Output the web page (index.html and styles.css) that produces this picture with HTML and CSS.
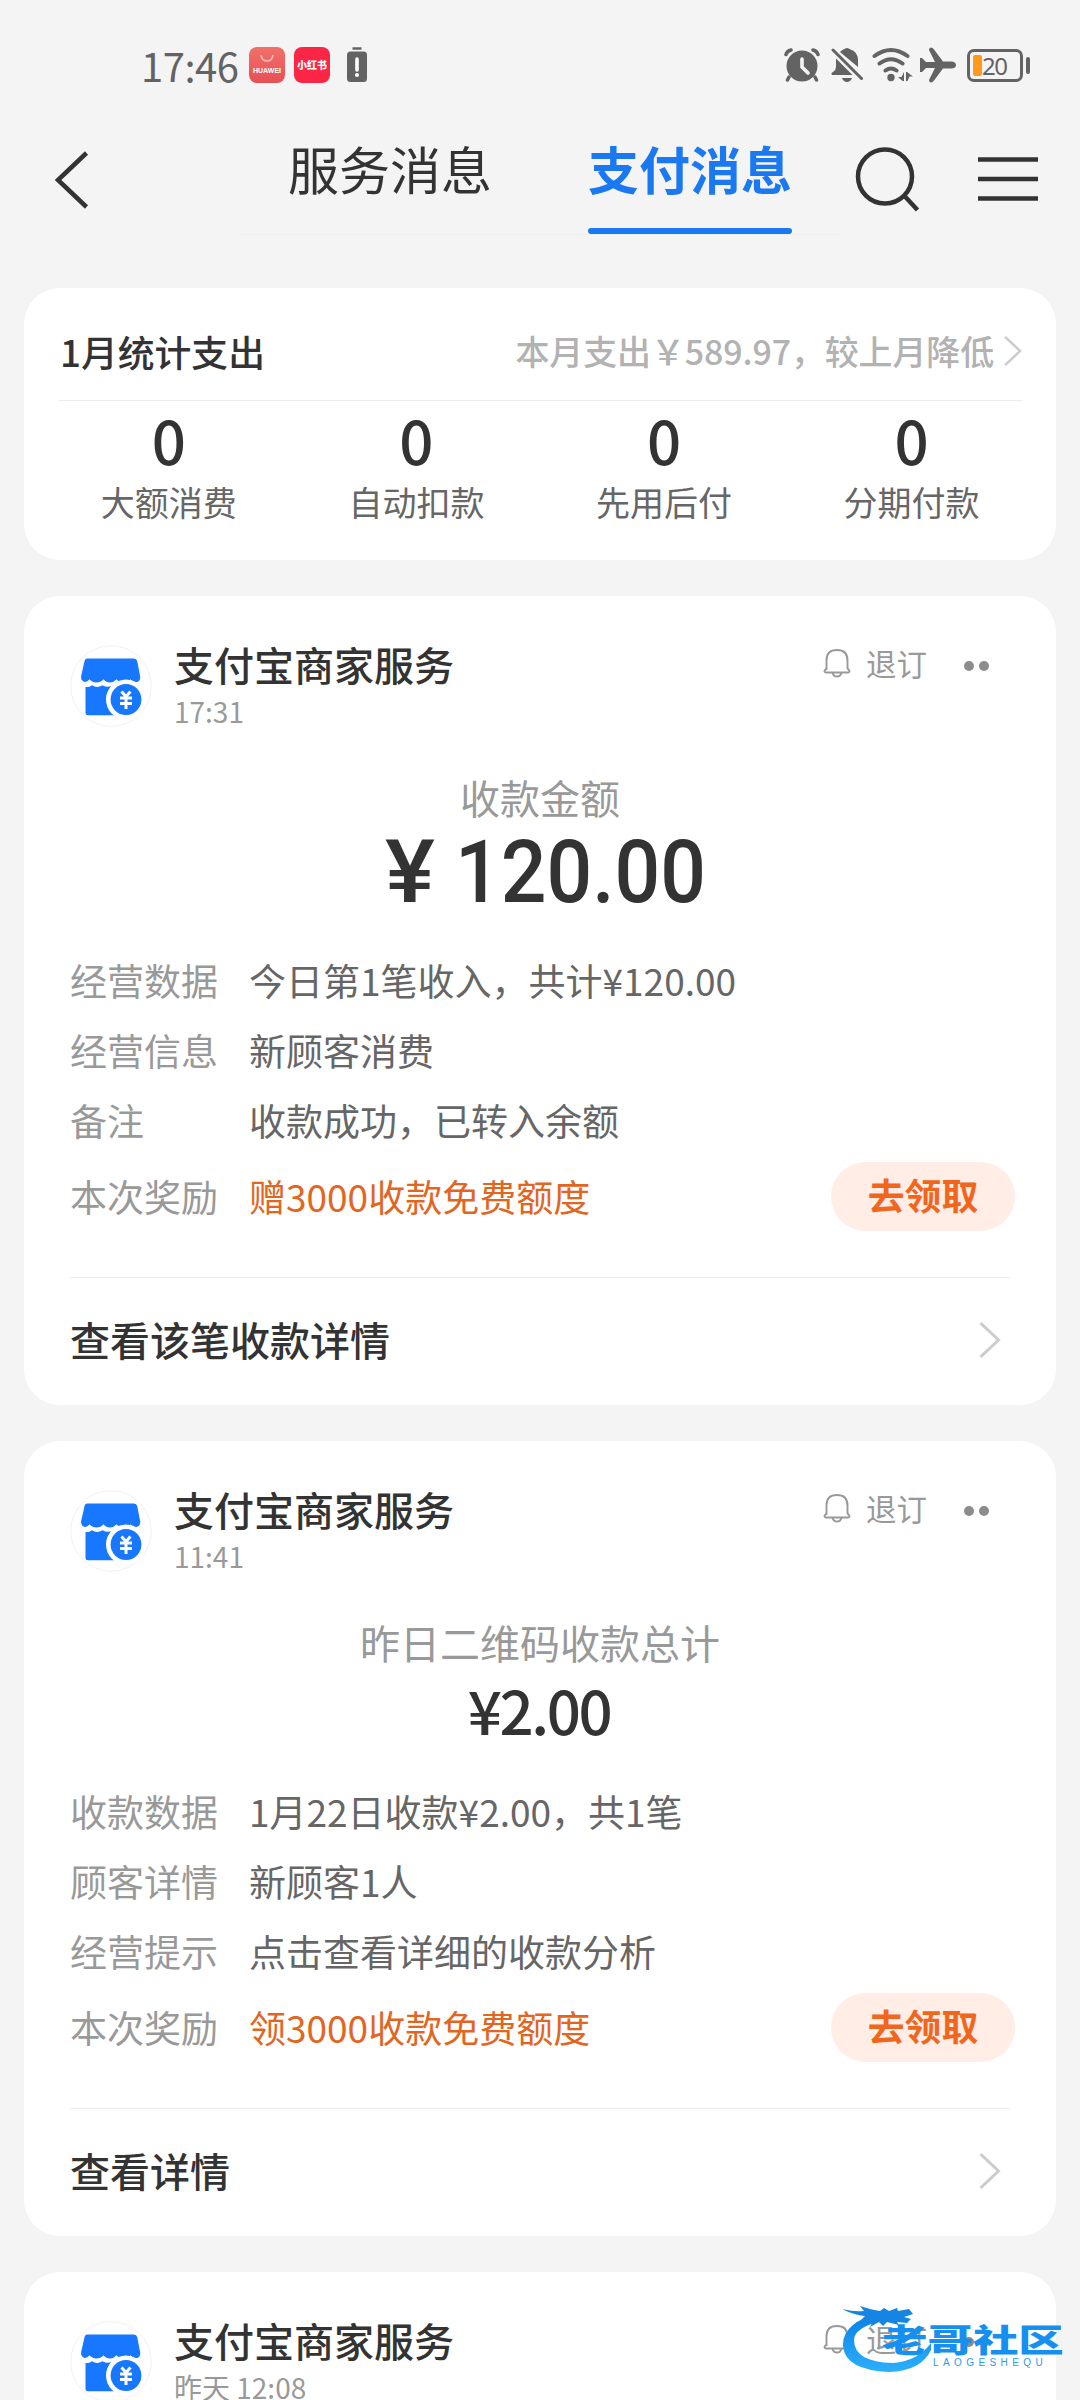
FILE: index.html
```html
<!DOCTYPE html>
<html lang="zh-CN">
<head>
<meta charset="utf-8">
<title>支付消息</title>
<link rel="stylesheet" href="styles.css">
</head>
<body>
<svg class="defs" aria-hidden="true">
  <symbol id="store" viewBox="0 0 82 82">
    <circle cx="41" cy="41" r="40.3" fill="#fff" stroke="#f1f1f1"/>
    <path d="M18 13.5h46q2.500 0 3.200 2.500l3 15.500q.4 5-4.200 5.800-3.200.4-5.500-3-2.800 3.300-7 3.300t-7-3.300q-2.800 3.300-6.500 3.300t-6.500-3.300q-3 3.300-7 3.300t-7-3.300q-2.500 3.300-5.500 2.500-3.600-1.600-2.800-6l3.400-15q.8-2.300 2.400-2.300z" fill="#1777ff"/>
    <path d="M15.500 42q3.500.5 6.500-1.800 5 3.500 10.500 0 5 3 9.500.5h8v29.500H18q-2.500 0-2.500-2.500z" fill="#1777ff"/>
    <circle cx="56" cy="54.500" r="20" fill="#fff"/>
    <circle cx="56" cy="54.500" r="15.400" fill="#1777ff"/>
    <path d="M51.500 46.500l4.500 5 4.500-5M50 53h12M50 58.500h12M56 51.500v12.500" fill="none" stroke="#fff" stroke-width="3"/>
  </symbol>
  <symbol id="bell" viewBox="0 0 30 30">
    <path d="M4.500 22v-9.500Q4.500 2 15 2t10.500 10.500V20q.3 1.200 1.600 2.200 1.200 2-.9 2.300H3.800q-2.100-.3-.9-2.300 1.300-1 1.600-2.200M10.500 25q1 3.500 4.500 3.500t4.500-3.500" fill="none" stroke="#999" stroke-width="1.900"/>
  </symbol>
  <symbol id="chev" viewBox="0 0 24 38">
    <path d="M2.500 2l18 17-18 17" fill="none" stroke="#ccc" stroke-width="3"/>
  </symbol>
</svg>
<div class="screen">
  <header class="status">
    <div class="status-left">
      <span class="clock">17:46</span>
      <span class="app app-hw"><svg width="16" height="8" viewBox="0 0 16 8"><path d="M2 0q1 6 6 6t6-6" fill="none" stroke="#fbb" stroke-width="1.600"/></svg><b>HUAWEI</b></span>
      <span class="app app-red">小红书</span>
      <svg class="warn" width="20" height="36" viewBox="0 0 20 36"><path d="M5.500 1.500h9" stroke="#636363" stroke-width="2.500"/><rect y="4.500" width="20" height="30.500" rx="3.500" fill="#636363"/><path d="M10 12v11" stroke="#fff" stroke-width="3.600" stroke-linecap="round"/><circle cx="10" cy="28" r="2" fill="#fff"/></svg>
    </div>
    <div class="status-right">
      <svg width="36" height="34" viewBox="0 0 36 34"><circle cx="18" cy="18" r="15.500" fill="#636363"/><path d="M2 6.500q1-3.500 5-4.500M34 6.500q-1-3.500-5-4.500M5 29l-1.500 3M31 29l1.500 3" stroke="#636363" stroke-width="3.500" fill="none" stroke-linecap="round"/><path d="M18 11v8l6 6" stroke="#f4f4f4" stroke-width="3.600" fill="none" stroke-linecap="round"/></svg>
      <svg width="32" height="36" viewBox="0 0 32 36"><path d="M9 5q1.500-2 3.500-2.500 3.500-3 7 0Q26 4.500 27 12v8zM5 11.500L21.500 28H1q-1.500-2 1-3 3-2 3-5zM11 31h10q-1.500 4-5 4t-5-4z" fill="#636363"/><path d="M2 3l28.500 28.500" stroke="#636363" stroke-width="3" stroke-linecap="round"/></svg>
      <svg width="42" height="36" viewBox="0 0 42 36"><g fill="none" stroke="#636363" stroke-width="4" stroke-linecap="round"><path d="M2.500 9q16.500-12 33 0M7.500 16.500q11.500-8.500 23 0M13.500 23.500q5.500-4 11 0"/></g><circle cx="19" cy="30.500" r="3.700" fill="#636363"/><path d="M32 25v9h-1.500L26 30h3.500zM35 25l6 4.500h-3.500l-2 4.500H34v-9z" fill="#636363"/></svg>
      <svg width="36" height="36" viewBox="0 0 36 36"><path d="M0 11h2l4 4h9L9 3q0-2.500 2-2.500 1.500 0 3 2L23 14.500h9q4 .5 4 3.500t-4 3.500h-9L14 33.500q-1.500 2-3 2-2 0-2-2.500l6-12H6l-4 4H0z" fill="#636363"/></svg>
      <span class="battery"><i></i>20</span><span class="tip"></span>
    </div>
  </header>

  <nav class="nav">
    <svg class="back" width="36" height="60" viewBox="0 0 36 60"><path d="M33.500 3L5 30l28.500 27" fill="none" stroke="#333" stroke-width="4.500"/></svg>
    <div class="tabs">
      <span class="tab">服务消息</span>
      <span class="tab active">支付消息</span>
    </div>
    <svg class="search" width="66" height="68" viewBox="0 0 66 68"><circle cx="30" cy="31.500" r="27" fill="none" stroke="#333" stroke-width="4.500"/><path d="M50 51.500L62.500 65" stroke="#333" stroke-width="4.500"/></svg>
    <svg class="menu" width="60" height="46" viewBox="0 0 60 46"><path d="M0 3.500h60M0 23h60M0 42.500h60" stroke="#333" stroke-width="4.700"/></svg>
  </nav>

  <main class="list">
    <section class="card summary">
      <div class="sum-head">
        <h2>1月统计支出</h2>
        <span class="sum-note">本月支出￥589.97，较上月降低</span>
        <svg class="sum-chev" viewBox="0 0 24 38"><use href="#chev"/></svg>
      </div>
      <div class="stats">
        <div class="stat"><b>0</b><span>大额消费</span></div>
        <div class="stat"><b>0</b><span>自动扣款</span></div>
        <div class="stat"><b>0</b><span>先用后付</span></div>
        <div class="stat"><b>0</b><span>分期付款</span></div>
      </div>
    </section>

    <section class="card msg">
      <div class="head">
        <svg class="avatar"><use href="#store"/></svg>
        <div class="who"><h3>支付宝商家服务</h3><time>17:31</time></div>
        <div class="unsub"><svg class="bell"><use href="#bell"/></svg><span>退订</span><i class="dot"></i><i class="dot"></i></div>
      </div>
      <p class="caption">收款金额</p>
      <p class="amount din"><span class="yen">¥</span><span class="num">120.00</span></p>
      <dl class="rows">
        <div><dt>经营数据</dt><dd>今日第1笔收入，共计¥120.00</dd></div>
        <div><dt>经营信息</dt><dd>新顾客消费</dd></div>
        <div><dt>备注</dt><dd>收款成功，已转入余额</dd></div>
        <div class="reward"><dt>本次奖励</dt><dd>赠3000收款免费额度</dd><button>去领取</button></div>
      </dl>
      <div class="foot"><span>查看该笔收款详情</span><svg class="chev"><use href="#chev"/></svg></div>
    </section>

    <section class="card msg">
      <div class="head">
        <svg class="avatar"><use href="#store"/></svg>
        <div class="who"><h3>支付宝商家服务</h3><time>11:41</time></div>
        <div class="unsub"><svg class="bell"><use href="#bell"/></svg><span>退订</span><i class="dot"></i><i class="dot"></i></div>
      </div>
      <p class="caption">昨日二维码收款总计</p>
      <p class="amount">¥2.00</p>
      <dl class="rows">
        <div><dt>收款数据</dt><dd>1月22日收款¥2.00，共1笔</dd></div>
        <div><dt>顾客详情</dt><dd>新顾客1人</dd></div>
        <div><dt>经营提示</dt><dd>点击查看详细的收款分析</dd></div>
        <div class="reward"><dt>本次奖励</dt><dd>领3000收款免费额度</dd><button>去领取</button></div>
      </dl>
      <div class="foot"><span>查看详情</span><svg class="chev"><use href="#chev"/></svg></div>
    </section>

    <section class="card msg">
      <div class="head">
        <svg class="avatar"><use href="#store"/></svg>
        <div class="who"><h3>支付宝商家服务</h3><time>昨天 12:08</time></div>
        <div class="unsub"><svg class="bell"><use href="#bell"/></svg><span>退订</span><i class="dot"></i><i class="dot"></i></div>
      </div>
    </section>
  </main>

  <div class="mark">
    <svg class="dragon" width="96" height="72" viewBox="0 0 96 72">
      <defs><linearGradient id="g" x1="0" y1="0" x2="0" y2="1"><stop offset="0" stop-color="#0a7fe6"/><stop offset="1" stop-color="#2bb0fb"/></linearGradient></defs>
      <path d="M36 9Q-1 19 0 42q2 24 46 26 32-1 42-22v-7q-13 18-38 20-39-1-39-23 0-12 27-19z" fill="url(#g)"/>
      <path d="M-1 5q12 3 22 2l-4-5q12 4 20 5l4-3 5 3 8-3 1 3 11-2 4 5-9 3 7 2-4 4-10-1 2 3-12-3-4 4-4-4-9 5 2-4-9 2 6-6-8 1 4-4Q10 11-1 5z" fill="#1585e4"/>
    </svg>
    <span class="mark-cn">老哥社区</span>
    <span class="mark-en">LAOGESHEQU</span>
  </div>
</div>
</body>
</html>
```
FILE: styles.css
```css
* { box-sizing: border-box; margin: 0; padding: 0; }
body {
  background: #f4f4f4;
  color: #333;
  font-family: "Noto Sans CJK SC", sans-serif;
}
.defs { position: absolute; width: 0; height: 0; }
.screen { position: relative; width: 1080px; height: 2400px; overflow: hidden; }
h2, h3 { font-weight: 500; }

/* status bar */
.status { display: flex; justify-content: space-between; height: 130px; padding: 0 50px 0 141px; color: #636363; }
.status-left, .status-right { display: flex; align-items: center; }
.clock { width: 108px; font-size: 40px; line-height: 50px; letter-spacing: -.5px; }
.app { display: flex; flex-direction: column; align-items: center; justify-content: center; width: 36px; height: 36px; border-radius: 8px; color: #fff; }
.app-hw { margin-right: 9px; background: linear-gradient(#f2706a, #e65055); }
.app-hw b { font: bold 7px/10px "Liberation Sans", sans-serif; margin-top: 3px; }
.app-red { margin-right: 17px; background: #fb2645; font-size: 10px; font-weight: 900; line-height: 14px; }
.status-right svg:nth-child(1) { margin-right: 11px; }
.status-right svg:nth-child(2) { margin-right: 9px; }
.status-right svg:nth-child(3) { margin-right: 6px; }
.status-right svg:nth-child(4) { margin-right: 11px; }
.battery { display: flex; align-items: center; width: 56px; height: 33px; padding-left: 3px; border: 3px solid #636363; border-radius: 7px; font: 24px/27px "Noto Sans", sans-serif; letter-spacing: -1.500px; }
.battery i { width: 9px; height: 21px; border-radius: 2px; background: #ff9a1f; }
.tip { width: 4px; height: 17px; margin-left: 3px; border-radius: 2px; background: #636363; }

/* navigation */
.nav { display: flex; height: 105px; padding-left: 53px; }
.back { margin-top: 20px; }
.tabs { display: flex; gap: 96px; width: 600px; margin-left: 151px; padding-left: 48px; border-bottom: 1px solid #efefef; }
.tab { width: 204px; height: 104px; padding-top: 3px; font-size: 51px; line-height: 70px; white-space: nowrap; }
.tab.active { color: #1a78f0; font-weight: 700; }
.tab.active::after { content: ""; display: block; height: 6px; margin-top: 25px; border-radius: 3px; background: #1a78f0; }
.search { margin: 15px 0 0 15px; }
.menu { margin: 26px 0 0 57px; }

/* cards */
.list { display: flex; flex-direction: column; gap: 36px; padding: 53px 24px 0; }
.card { border-radius: 36px; background: #fff; }
.summary { height: 272px; padding: 0 21px; }
.sum-head { display: flex; align-items: center; height: 113px; margin: 0 12px 0 14px; padding: 13px 0 0 1px; border-bottom: 1px solid #ececec; }
.sum-head h2 { font-size: 36.800px; line-height: 50px; }
.sum-note { margin-left: auto; color: #b2b2b2; font-size: 34px; font-weight: 500; line-height: 48px; letter-spacing: -.15px; }
.sum-chev { width: 20px; height: 32px; margin-left: 9px; }
.stats { display: grid; grid-template-columns: repeat(4, 247.600px); }
.stat { display: flex; flex-direction: column; align-items: center; }
.stat b { height: 78px; font-size: 60px; font-weight: 500; line-height: 76px; }
.stat span { color: #666; font-size: 34px; line-height: 46px; }

.head { display: flex; height: 168px; padding: 49px 62px 0 46px; }
.avatar { width: 82px; height: 82px; }
.who { display: flex; flex-direction: column; margin-left: 22px; }
.who h3 { height: 44px; font-size: 40px; line-height: 38px; white-space: nowrap; }
.who time { color: #999; font-size: 28px; line-height: 44px; }
.unsub { display: flex; align-items: center; height: 36px; margin-left: auto; color: #999; font-size: 30.500px; line-height: 36px; }
.bell { width: 30px; height: 30px; margin-right: 14px; }
.unsub span { margin-right: 37px; }
.dot { width: 10px; height: 10px; margin: 6px 5px 0 0; border-radius: 50%; background: #8c8c8c; }
.caption { height: 70px; color: #999; font-size: 40px; line-height: 66px; text-align: center; }
.amount { height: 98px; padding-right: 2px; font-size: 60px; font-weight: 500; line-height: 60px; letter-spacing: -2.400px; text-align: center; }
.din { display: flex; height: 112px; font-family: Roboto, sans-serif; font-size: 87px; line-height: 76px; letter-spacing: 0; text-align: left; }
.yen { width: 70px; margin-left: 361px; transform: scaleX(1.080); transform-origin: left; }
.num { transform: scaleX(.925); transform-origin: left; }
.rows { height: 331px; padding: 0 41px 0 46px; font-size: 37px; line-height: 69px; }
.rows > div { display: flex; height: 70px; white-space: nowrap; }
.rows dt { width: 179px; color: #999; }
.rows dd { color: #666; }
.rows .reward { align-items: center; margin-top: 5px; }
.rows .reward dd { color: #e2661f; }
.reward button { width: 184px; height: 69px; padding-bottom: 5px; margin-left: auto; border: 0; border-radius: 35px; background: #ffede6; color: #f2651c; font: 700 36.800px/64px "Noto Sans CJK SC", sans-serif; }
.foot { display: flex; align-items: center; justify-content: space-between; height: 128px; margin: 0 46px; padding: 0 8px 4px 0; border-top: 1px solid #ececec; font-size: 40px; font-weight: 500; }
.foot span { padding-bottom: 2px; }
.chev { width: 24px; height: 38px; }

/* community mark, over the last card */
.mark { position: absolute; left: 843px; top: 2304px; width: 230px; height: 72px; }
.dragon { position: absolute; left: 0; top: 0; }
.mark-cn { position: absolute; left: 39px; top: 14px; font-size: 32px; line-height: 40px; font-weight: 900; color: #168ff0; white-space: nowrap; transform: scaleX(1.420); transform-origin: left; }
.mark-en { position: absolute; left: 90px; top: 53px; font: 10px/12px "Liberation Sans", sans-serif; letter-spacing: 4.400px; color: #2b9bef; }
```
